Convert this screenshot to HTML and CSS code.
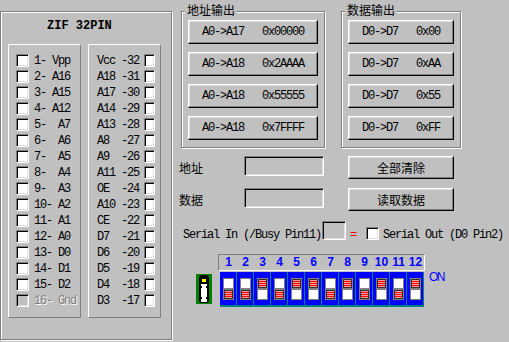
FILE: index.html
```html
<!DOCTYPE html>
<html lang="zh">
<head>
  <meta charset="UTF-8" />
  <title>ZIF 32PIN</title>
  <link rel="stylesheet" href="styles.css">
</head>
<body>
  <div class="window">
    <div class="zif">
      <div class="zif-title">ZIF 32PIN</div>
      <div class="zif-cols">
        <div class="pins">
          <label class="pin"><input type="checkbox" class="chk"><span>1- Vpp</span></label>
          <label class="pin"><input type="checkbox" class="chk"><span>2- A16</span></label>
          <label class="pin"><input type="checkbox" class="chk"><span>3- A15</span></label>
          <label class="pin"><input type="checkbox" class="chk"><span>4- A12</span></label>
          <label class="pin"><input type="checkbox" class="chk"><span>5-  A7</span></label>
          <label class="pin"><input type="checkbox" class="chk"><span>6-  A6</span></label>
          <label class="pin"><input type="checkbox" class="chk"><span>7-  A5</span></label>
          <label class="pin"><input type="checkbox" class="chk"><span>8-  A4</span></label>
          <label class="pin"><input type="checkbox" class="chk"><span>9-  A3</span></label>
          <label class="pin"><input type="checkbox" class="chk"><span>10- A2</span></label>
          <label class="pin"><input type="checkbox" class="chk"><span>11- A1</span></label>
          <label class="pin"><input type="checkbox" class="chk"><span>12- A0</span></label>
          <label class="pin"><input type="checkbox" class="chk"><span>13- D0</span></label>
          <label class="pin"><input type="checkbox" class="chk"><span>14- D1</span></label>
          <label class="pin"><input type="checkbox" class="chk"><span>15- D2</span></label>
          <label class="pin off"><input type="checkbox" class="chk" disabled><span>16- Gnd</span></label>
        </div>
        <div class="pins pins-right">
          <label class="pin"><span>Vcc -32</span><input type="checkbox" class="chk"></label>
          <label class="pin"><span>A18 -31</span><input type="checkbox" class="chk"></label>
          <label class="pin"><span>A17 -30</span><input type="checkbox" class="chk"></label>
          <label class="pin"><span>A14 -29</span><input type="checkbox" class="chk"></label>
          <label class="pin"><span>A13 -28</span><input type="checkbox" class="chk"></label>
          <label class="pin"><span>A8  -27</span><input type="checkbox" class="chk"></label>
          <label class="pin"><span>A9  -26</span><input type="checkbox" class="chk"></label>
          <label class="pin"><span>A11 -25</span><input type="checkbox" class="chk"></label>
          <label class="pin"><span>OE  -24</span><input type="checkbox" class="chk"></label>
          <label class="pin"><span>A10 -23</span><input type="checkbox" class="chk"></label>
          <label class="pin"><span>CE  -22</span><input type="checkbox" class="chk"></label>
          <label class="pin"><span>D7  -21</span><input type="checkbox" class="chk"></label>
          <label class="pin"><span>D6  -20</span><input type="checkbox" class="chk"></label>
          <label class="pin"><span>D5  -19</span><input type="checkbox" class="chk"></label>
          <label class="pin"><span>D4  -18</span><input type="checkbox" class="chk"></label>
          <label class="pin"><span>D3  -17</span><input type="checkbox" class="chk"></label>
        </div>
      </div>
    </div>

    <div class="main">
      <div class="groups">
        <div class="group group-addr">
          <span class="group-title">地址输出</span>
          <button class="btn">A0->A17   0x00000</button>
          <button class="btn">A0->A18   0x2AAAA</button>
          <button class="btn">A0->A18   0x55555</button>
          <button class="btn">A0->A18   0x7FFFF</button>
        </div>
        <div class="group group-data">
          <span class="group-title">数据输出</span>
          <button class="btn">D0->D7   0x00</button>
          <button class="btn">D0->D7   0xAA</button>
          <button class="btn">D0->D7   0x55</button>
          <button class="btn">D0->D7   0xFF</button>
        </div>
      </div>

      <div class="rows">
        <div class="io-row">
          <span class="io-label">地址</span>
          <input type="text" class="field" readonly>
          <button class="btn btn-cn">全部清除</button>
        </div>
        <div class="io-row">
          <span class="io-label">数据</span>
          <input type="text" class="field" readonly>
          <button class="btn btn-cn">读取数据</button>
        </div>
      </div>

      <div class="serial">
        <span class="serial-text">Serial In (/Busy Pin11)</span>
        <input type="text" class="field serial-box" readonly>
        <span class="eq">=</span>
        <input type="checkbox" class="chk">
        <span class="serial-text serial-out">Serial Out (D0 Pin2)</span>
      </div>

      <div class="dip-row">
        <svg class="led" width="16" height="30" viewBox="0 0 16 30">
          <rect width="16" height="30" fill="#008000"/>
          <rect x="3" y="1" width="10" height="28" rx="3" fill="#000"/>
          <rect x="6" y="5" width="4" height="3" fill="#ffff00"/>
          <rect x="5" y="10" width="6" height="18" fill="#fff"/>
          <rect x="5" y="12" width="1" height="2" fill="#000"/>
          <rect x="10" y="12" width="1" height="2" fill="#000"/>
          <rect x="5" y="23" width="1" height="2" fill="#000"/>
          <rect x="10" y="23" width="1" height="2" fill="#000"/>
        </svg>
        <div class="dip">
          <div class="dip-nums">
            <span>1</span><span>2</span><span>3</span><span>4</span><span>5</span><span>6</span>
            <span>7</span><span>8</span><span>9</span><span>10</span><span>11</span><span>12</span>
          </div>
          <div class="dip-body">
            <div class="cell"><div class="slot"><span class="hole"></span><span class="knob"></span></div></div>
            <div class="cell"><div class="slot"><span class="hole"></span><span class="knob"></span></div></div>
            <div class="cell"><div class="slot"><span class="knob"></span><span class="hole"></span></div></div>
            <div class="cell"><div class="slot"><span class="hole"></span><span class="knob"></span></div></div>
            <div class="cell"><div class="slot"><span class="knob"></span><span class="hole"></span></div></div>
            <div class="cell"><div class="slot"><span class="knob"></span><span class="hole"></span></div></div>
            <div class="cell"><div class="slot"><span class="hole"></span><span class="knob"></span></div></div>
            <div class="cell"><div class="slot"><span class="knob"></span><span class="hole"></span></div></div>
            <div class="cell"><div class="slot"><span class="hole"></span><span class="knob"></span></div></div>
            <div class="cell"><div class="slot"><span class="knob"></span><span class="hole"></span></div></div>
            <div class="cell"><div class="slot"><span class="hole"></span><span class="knob"></span></div></div>
            <div class="cell"><div class="slot"><span class="knob"></span><span class="hole"></span></div></div>
          </div>
        </div>
        <span class="on">ON</span>
      </div>
    </div>
  </div>
</body>
</html>
```

FILE: styles.css
```css
* { margin: 0; padding: 0; box-sizing: border-box; }
body {
  width: 509px;
  height: 342px;
  overflow: hidden;
  background: #c0c0c0;
  color: #000;
  font-family: "Liberation Mono", "Noto Sans CJK SC", monospace;
  font-size: 12px;
}
.window {
  display: flex;
  height: 342px;
}

/* left: socket pins */
.zif {
  margin-top: 11px;
  width: 172px;
  height: 329px;
  border: 1px solid #808080;
  box-shadow: inset 1px 1px #fff, 1px 1px #fff;
}
.zif-title {
  font-weight: bold;
  line-height: 14px;
  padding: 7px 0 0 46px;
}
.zif-cols {
  display: flex;
  gap: 7px;
  margin-top: 11px;
  padding-left: 7px;
}
.pins {
  width: 73px;
  height: 274px;
  border: 1px solid;
  border-color: #fff #808080 #808080 #fff;
  padding-top: 7px;
}
.pin {
  display: flex;
  align-items: center;
  gap: 5px;
  height: 16px;
  padding-left: 7px;
}
.pins-right .pin {
  justify-content: space-between;
  padding: 0 5px 0 8px;
}
.pin span {
  white-space: pre;
  letter-spacing: -1.2px;
  line-height: 16px;
  padding-top: 1px;
}
.pin.off span {
  color: #808080;
  text-shadow: 1px 1px #fff;
}
.chk {
  appearance: none;
  width: 13px;
  height: 13px;
  background: #fff;
  border: 1px solid;
  border-color: #808080 #fff #fff #808080;
  box-shadow: inset 1px 1px #000, inset -1px -1px #dfdfdf;
}
.chk:disabled { background: #c0c0c0; }

/* right side */
.main {
  display: flex;
  flex-direction: column;
}
.groups {
  display: flex;
  gap: 16px;
  margin: 11px 0 0 9px;
}
.group {
  position: relative;
  display: flex;
  flex-direction: column;
  gap: 8px;
  height: 137px;
  padding: 8px 0 0 6px;
  border: 1px solid #808080;
  box-shadow: inset 1px 1px #fff, 1px 1px #fff;
}
.group-addr { width: 144px; }
.group-data { width: 120px; }
.group-title {
  position: absolute;
  top: -9px;
  left: 3px;
  padding: 0 2px;
  background: #c0c0c0;
  font-family: "Noto Sans CJK SC", sans-serif;
  line-height: 14px;
}
.btn {
  height: 24px;
  background: #c0c0c0;
  color: #000;
  font: inherit;
  letter-spacing: -1.2px;
  white-space: pre;
  border: 1px solid;
  border-color: #fff #000 #000 #fff;
  box-shadow: inset -1px -1px #808080, inset 1px 1px #dfdfdf;
}
.group-addr .btn { width: 130px; }
.group-data .btn { width: 106px; }

.rows { margin-top: 8px; }
.io-row {
  display: flex;
  align-items: flex-start;
  margin-left: 7px;
}
.io-row + .io-row { margin-top: 9px; }
.io-label {
  width: 65px;
  line-height: 23px;
  font-family: "Noto Sans CJK SC", sans-serif;
}
.field {
  width: 80px;
  height: 20px;
  background: #c0c0c0;
  border: 1px solid;
  border-color: #808080 #fff #fff #808080;
  box-shadow: inset 1px 1px #000, inset -1px -1px #dfdfdf;
  outline: none;
}
.btn-cn {
  width: 106px;
  height: 23px;
  margin-left: 24px;
  font-family: "Noto Sans CJK SC", sans-serif;
  letter-spacing: 0;
}

.serial {
  display: flex;
  align-items: flex-start;
  height: 19px;
  margin: 10px 0 0 11px;
}
.serial-text {
  margin-top: 7px;
  white-space: pre;
  letter-spacing: -1.2px;
  line-height: 14px;
}
.serial-box {
  width: 24px;
  height: 19px;
  margin-left: 1px;
}
.eq {
  color: #f00;
  margin: 7px 0 0 4px;
  line-height: 14px;
  letter-spacing: -1.2px;
}
.serial .chk { margin: 6px 0 0 10px; }
.serial-out { margin-left: 4px; }

/* dip switch */
.dip-row {
  display: flex;
  align-items: flex-start;
  margin: 14px 0 0 24px;
}
.led { margin-top: 20px; }
.dip {
  width: 207px;
  margin-left: 6px;
}
.dip-nums {
  display: flex;
  height: 17px;
  padding-left: 1px;
  border: 1px solid;
  border-color: #808080 #fff #fff #808080;
}
.dip-nums span {
  width: 17px;
  text-align: center;
  color: #00f;
  font: bold 12px/15px "Liberation Sans", sans-serif;
}
.dip-body {
  display: flex;
  width: 204px;
  height: 35px;
  margin: 1px 0 0 2px;
  background: #0000ff;
  border-bottom: 2px solid #008080;
}
.cell {
  width: 17px;
  padding: 6px 0 0 3px;
  border-right: 1px solid #008080;
}
.slot {
  display: flex;
  flex-direction: column;
  width: 11px;
  height: 22px;
}
.hole {
  height: 11px;
  background: #fff;
  border: 1px solid #808080;
}
.knob {
  height: 11px;
  border: 1px solid #808080;
  background: repeating-linear-gradient(#ff0000 0 1px, #ff9a9a 1px 2px);
  box-shadow: inset 0 0 0 1px #303030;
}
.on {
  margin: 17px 0 0 4px;
  color: #00f;
  font: 12px/12px "Liberation Sans", sans-serif;
  letter-spacing: -1.5px;
}
```
